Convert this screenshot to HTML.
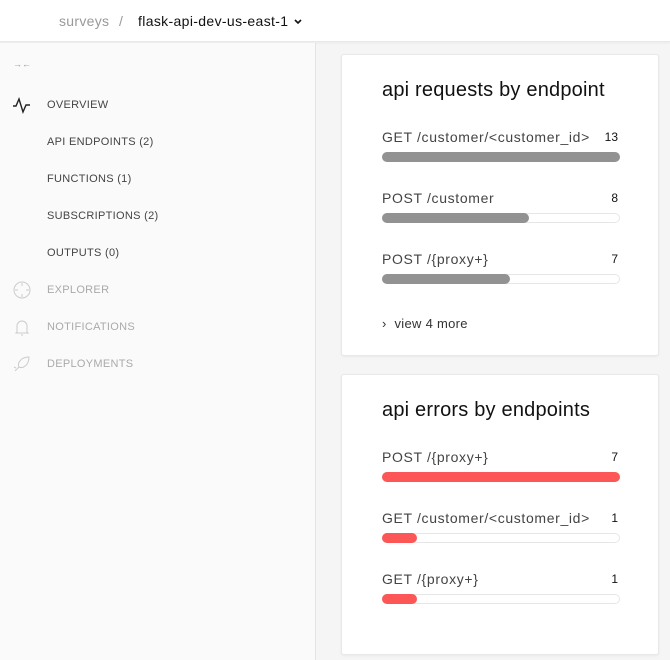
<!DOCTYPE html>
<html><head><style>
*{margin:0;padding:0;box-sizing:border-box}
body{width:670px;height:660px;overflow:hidden;background:#f5f5f5;font-family:"Liberation Sans",sans-serif;position:relative}
.hdr{position:absolute;left:0;top:0;width:670px;height:42px;background:#fff;border-bottom:1px solid #e8e8e8;box-shadow:0 1px 3px rgba(0,0,0,.05)}
.hdr .s{position:absolute;left:59px;top:13px;font-size:14px;color:#999;letter-spacing:.3px}
.hdr .sl{position:absolute;left:119px;top:13px;font-size:14px;color:#999}
.hdr .p{position:absolute;left:138px;top:13px;font-size:14px;color:#111;letter-spacing:.35px}
.side{position:absolute;left:0;top:43px;width:316px;height:617px;background:#fafafa;border-right:1px solid #e3e3e3}
.nav{position:absolute;left:47px;font-size:11px;letter-spacing:.3px;color:#444}
.nav.g{color:#aaa}
.card{position:absolute;left:341px;width:318px;background:#fff;border:1px solid #e8e8e8;border-radius:3px;box-shadow:0 1px 2px rgba(0,0,0,.05)}
.t{position:absolute;left:40px;font-size:20px;color:#111;letter-spacing:.2px}
.l{position:absolute;left:40px;font-size:14px;color:#444;letter-spacing:.65px}
.n{position:absolute;right:40px;font-size:12px;color:#111}
.bar{position:absolute;left:40px;width:238px;height:10px;border:1px solid #e6e6e6;border-radius:5px;background:#fff}
.bar i{position:absolute;left:-1px;top:-1px;height:10px;border-radius:5px;background:#929292}
.bar.r i{background:#fd5656}
</style></head><body>
<div class="hdr"><span class="s">surveys</span><span class="sl">/</span><span class="p">flask-api-dev-us-east-1 <svg width="10" height="8" viewBox="0 0 10 8"><path d="M2 2l3 3 3-3" stroke="#111" stroke-width="1.6" fill="none"/></svg></span></div>
<div class="side">
<div style="position:absolute;left:13px;top:16px;font-size:9px;color:#999">→←</div>
<svg style="position:absolute;left:12px;top:54px" width="20" height="18" viewBox="0 0 20 18"><path d="M1 9h3l3-7 4 13 3-7h4" stroke="#222" stroke-width="1.4" fill="none"/></svg>
<div class="nav" style="top:56px">OVERVIEW</div>
<div class="nav" style="top:93px">API ENDPOINTS (2)</div>
<div class="nav" style="top:130px">FUNCTIONS (1)</div>
<div class="nav" style="top:167px">SUBSCRIPTIONS (2)</div>
<div class="nav" style="top:204px">OUTPUTS (0)</div>
<svg style="position:absolute;left:12px;top:237px" width="20" height="20" viewBox="0 0 20 20"><circle cx="10" cy="10" r="8" stroke="#ccc" fill="none"/><path d="M10 3v3M10 14v3M3 10h3M14 10h3" stroke="#ccc"/></svg>
<div class="nav g" style="top:241px">EXPLORER</div>
<svg style="position:absolute;left:12px;top:274px" width="20" height="20" viewBox="0 0 20 20"><path d="M5 15V9a5 5 0 0110 0v6l1 1H4z M9 18h2" stroke="#ccc" fill="none"/></svg>
<div class="nav g" style="top:278px">NOTIFICATIONS</div>
<svg style="position:absolute;left:12px;top:311px" width="20" height="20" viewBox="0 0 20 20"><path d="M7 13C5 9 9 3 17 3c0 8-6 12-10 10z M3 17l4-4 M2 13l2 1" stroke="#ccc" fill="none"/></svg>
<div class="nav g" style="top:315px">DEPLOYMENTS</div>
</div>
<div class="card" style="top:54px;height:302px">
<div class="t" style="top:24px">api requests by endpoint</div>
<div class="l" style="top:74px">GET /customer/&lt;customer_id&gt;</div><div class="n" style="top:75px">13</div>
<div class="bar" style="top:97px"><i style="width:238px"></i></div>
<div class="l" style="top:135px">POST /customer</div><div class="n" style="top:136px">8</div>
<div class="bar" style="top:158px"><i style="width:147px"></i></div>
<div class="l" style="top:196px">POST /{proxy+}</div><div class="n" style="top:197px">7</div>
<div class="bar" style="top:219px"><i style="width:128px"></i></div>
<div class="l" style="top:261px;font-size:13px;color:#333;letter-spacing:.3px">› &nbsp;view 4 more</div>
</div>
<div class="card" style="top:374px;height:281px">
<div class="t" style="top:24px">api errors by endpoints</div>
<div class="l" style="top:74px">POST /{proxy+}</div><div class="n" style="top:75px">7</div>
<div class="bar r" style="top:97px"><i style="width:238px"></i></div>
<div class="l" style="top:135px">GET /customer/&lt;customer_id&gt;</div><div class="n" style="top:136px">1</div>
<div class="bar r" style="top:158px"><i style="width:35px"></i></div>
<div class="l" style="top:196px">GET /{proxy+}</div><div class="n" style="top:197px">1</div>
<div class="bar r" style="top:219px"><i style="width:35px"></i></div>
</div>
</body></html>
